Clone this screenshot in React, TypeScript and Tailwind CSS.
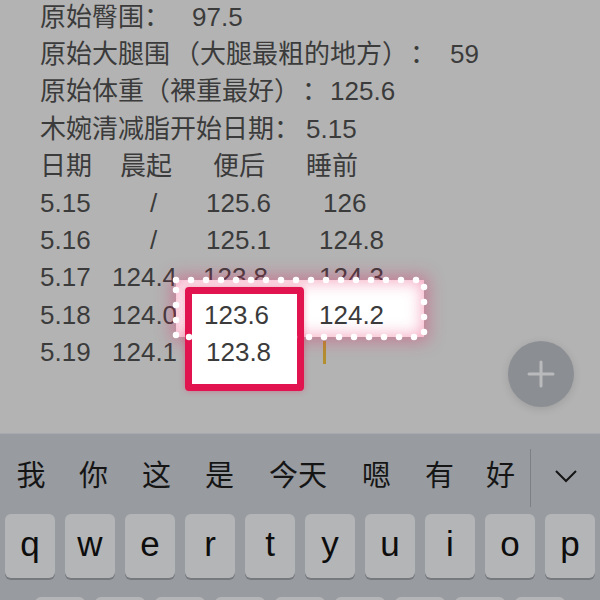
import React from "react";

const FONT = { fontFamily: '"Liberation Sans", "Noto Sans CJK SC", sans-serif' };

type Row = { c1: string; c2: string; c3: string; c4: string; p2: string; p3: string; p4: string; top3?: boolean; top4?: boolean; cursor?: boolean };

const rows: Row[] = [
  { c1: "日期", c2: "晨起", c3: "便后", c4: "睡前", p2: "pl-[8px]", p3: "pl-[10px]", p4: "pl-[6px]" },
  { c1: "5.15", c2: "/", c3: "125.6", c4: "126", p2: "pl-[38px]", p3: "pl-[3px]", p4: "pl-[23px]" },
  { c1: "5.16", c2: "/", c3: "125.1", c4: "124.8", p2: "pl-[38px]", p3: "pl-[3px]", p4: "pl-[19px]" },
  { c1: "5.17", c2: "124.4", c3: "123.8", c4: "124.3", p2: "pl-0", p3: "pl-0", p4: "pl-[19px]" },
  { c1: "5.18", c2: "124.0", c3: "123.6", c4: "124.2", p2: "pl-0", p3: "pl-[1px]", p4: "pl-[19px]", top3: true, top4: true },
  { c1: "5.19", c2: "124.1", c3: "123.8", c4: "", p2: "pl-0", p3: "pl-[3px]", p4: "pl-[23px]", top3: true, cursor: true },
];

const suggestions = [
  { t: "我", w: "w-[62px]" },
  { t: "你", w: "w-[63px]" },
  { t: "这", w: "w-[63px]" },
  { t: "是", w: "w-[63px]" },
  { t: "今天", w: "w-[94px]" },
  { t: "嗯", w: "w-[63px]" },
  { t: "有", w: "w-[63px]" },
  { t: "好", w: "w-[59px]" },
];

const Key = ({ k }: { k: string }) => (
  <div className="flex h-[64px] w-[50px] shrink-0 items-center justify-center rounded-[6px] bg-[#b4b5b7] pb-[4px] text-[35px] text-[#0d0d0d] shadow-[0_2px_0_#76797e]">
    {k}
  </div>
);

export default function App() {
  return (
    <div className="relative flex h-[600px] w-[600px] flex-col overflow-hidden bg-[#b3b3b3]" style={FONT}>
      {/* note body */}
      <div className="relative h-[433px] shrink-0 pl-[40px] text-[26px] text-[#3b3b3b]">
        <div className="-mt-px">
          <div className="flex h-[37.2px] items-center whitespace-pre">
            原始臀围：<span className="ml-[22px]">97.5</span>
          </div>
          <div className="flex h-[37.2px] items-center whitespace-pre">
            原始大腿围<span className="ml-[4px]">（大腿最粗的地方）</span>
            <span className="ml-[2px]">：</span>
            <span className="ml-[14px]">59</span>
          </div>
          <div className="flex h-[37.2px] items-center whitespace-pre">
            原始体重（裸重最好）<span className="ml-[2px]">：</span>
            <span className="ml-[2px]">125.6</span>
          </div>
          <div className="flex h-[37.2px] items-center whitespace-pre">
            木婉清减脂开始日期：<span className="ml-[6px]">5.15</span>
          </div>
          {rows.map((r, i) => (
            <div key={i} className="flex h-[37.2px] items-center whitespace-pre">
              <div className="w-[72px] shrink-0">{r.c1}</div>
              <div className={`w-[91px] shrink-0 ${r.p2}`}>{r.c2}</div>
              <div className={`w-[97px] shrink-0 ${r.p3} ${r.top3 ? "relative z-30" : ""}`}>{r.c3}</div>
              <div className={`shrink-0 ${r.p4} ${r.top4 ? "relative z-30" : ""}`}>
                {r.cursor ? <div className="h-[23px] w-[3px] bg-[#b38f2f]" /> : r.c4}
              </div>
            </div>
          ))}
        </div>

        {/* dotted highlight */}
        <div className="absolute left-[176px] top-[280px] z-10 h-[57px] w-[248px] bg-white shadow-[0_0_16px_4px_rgba(228,40,100,0.4),inset_0_0_16px_2px_rgba(228,40,100,0.4)]" />
        {/* red box */}
        <div className="absolute left-[185px] top-[287px] z-10 h-[104px] w-[119px] rounded-[4px] border-[7px] border-[#e2144f] bg-white shadow-[0_0_6px_rgba(226,20,79,0.35)]" />
        <svg className="absolute left-[172px] top-[276px] z-20" width="256" height="65" viewBox="0 0 256 65">
          <rect
            x="4"
            y="4"
            width="248"
            height="57"
            fill="none"
            stroke="#ffffff"
            strokeWidth="6.5"
            strokeLinecap="round"
            strokeDasharray="0 15"
          />
        </svg>

        {/* add button */}
        <div className="absolute left-[508px] top-[341px] flex h-[66px] w-[66px] items-center justify-center rounded-full bg-[#8b8e93] shadow-[0_2px_8px_rgba(0,0,0,0.12)]">
          <svg width="28" height="28" viewBox="0 0 28 28">
            <path d="M14 2v24M2 14h24" stroke="#b9babc" strokeWidth="3" strokeLinecap="round" />
          </svg>
        </div>
      </div>

      {/* keyboard */}
      <div className="flex-1 border-t border-[#a6a9ad] bg-[#989ba0]">
        <div className="flex h-[80px] items-center text-[29px] text-[#151515]">
          {suggestions.map((s) => (
            <div key={s.t} className={`${s.w} shrink-0 pt-[6px] text-center`}>
              {s.t}
            </div>
          ))}
          <div className="h-[58px] w-px shrink-0 translate-y-[4px] bg-[#7d8085]" />
          <div className="flex flex-1 justify-center pt-[4px]">
            <svg width="24" height="14" viewBox="0 0 24 14">
              <path d="M2 2l10 10L22 2" fill="none" stroke="#151515" strokeWidth="2" />
            </svg>
          </div>
        </div>
        <div className="flex gap-[10px] pl-[5px]">
          {["q", "w", "e", "r", "t", "y", "u", "i", "o", "p"].map((k) => (
            <Key key={k} k={k} />
          ))}
        </div>
        {/* next row: only the key tops show */}
        <div className="mt-[19px] flex gap-[10px] pl-[35px]">
          {[1, 2, 3, 4, 5, 6, 7, 8, 9].map((k) => (
            <div key={k} className="h-[64px] w-[50px] shrink-0 rounded-[6px] bg-[#b4b5b7]" />
          ))}
        </div>
      </div>
    </div>
  );
}
